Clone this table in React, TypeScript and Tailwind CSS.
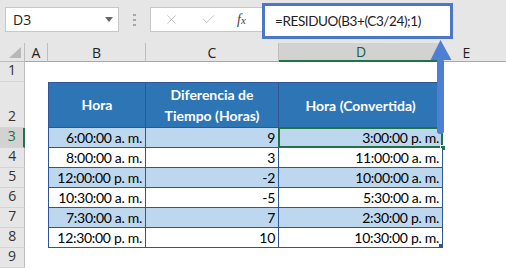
import { X, Check } from "lucide-react";

// Rows of the converted-time table: start time, offset in hours, result
const rows = [
  { hora: "6:00:00 a. m.", dif: "9", conv: "3:00:00 p. m." },
  { hora: "8:00:00 a. m.", dif: "3", conv: "11:00:00 a. m." },
  { hora: "12:00:00 p. m.", dif: "-2", conv: "10:00:00 a. m." },
  { hora: "10:30:00 a. m.", dif: "-5", conv: "5:30:00 a. m." },
  { hora: "7:30:00 a. m.", dif: "7", conv: "2:30:00 p. m." },
  { hora: "12:30:00 p. m.", dif: "10", conv: "10:30:00 p. m." },
];

const cellFont = { fontFamily: "Lato, 'Open Sans', sans-serif" };

function RowHeader({ n, selected }: { n: number; selected?: boolean }) {
  return (
    <div
      className={
        "w-[25px] shrink-0 flex items-end justify-center pb-[1px] border-b border-r text-[14px] text-[#333] border-b-[#d4d4d4] " +
        (selected ? "bg-[#d2d2d2] border-r-2 border-r-[#217346] text-[#217346]" : "bg-[#e6e6e6] border-r-[#bdbdbd]")
      }
      style={{ fontFamily: "'Open Sans', sans-serif" }}
    >
      {n}
    </div>
  );
}

function FormulaBar() {
  return (
    <div className="h-[43px] bg-[#e6e6e6] flex items-start text-[15px] text-[#222]" style={{ fontFamily: "'Open Sans', sans-serif" }}>
      <div className="mt-[7px] ml-[5px] w-[114px] h-[25px] bg-white border border-[#c6c6c6] flex items-center pl-[7px] pr-[5px]">
        <span className="flex-1 text-[14px]">D3</span>
        <svg width="8" height="5" viewBox="0 0 8 5">
          <path d="M0 0h8L4 5z" fill="#666" />
        </svg>
      </div>
      <div className="w-[31px] h-[40px] flex items-center justify-center">
        <svg width="3" height="12" viewBox="0 0 3 12">
          <rect x="0" y="0" width="3" height="2" fill="#a6a6a6" />
          <rect x="0" y="5" width="3" height="2" fill="#a6a6a6" />
          <rect x="0" y="10" width="3" height="2" fill="#a6a6a6" />
        </svg>
      </div>
      <div className="mt-[7px] h-[25px] w-[120px] bg-white border border-[#c6c6c6] border-r-0 flex items-center">
        <X className="ml-[13px] w-[15px] h-[15px] text-[#bdbdbd]" strokeWidth={1.5} />
        <Check className="ml-[22px] w-[15px] h-[15px] text-[#bdbdbd]" strokeWidth={1.5} />
        <span className="ml-[21px] text-[14px] italic text-[#444]" style={{ fontFamily: "'Liberation Serif', serif" }}>
          f<span className="text-[11px]">x</span>
        </span>
      </div>
      <div
        className="-ml-[8px] mt-[3px] w-[191px] h-[36px] bg-white border-[3px] border-[#4a77c9] flex items-center pl-[10px] text-[13.5px] tracking-[-0.4px]"
        style={cellFont}
      >
        =RESIDUO(B3+(C3/24);1)
      </div>
    </div>
  );
}

function ColumnHeaders() {
  const cols = [
    { l: "A", w: "w-[23px]" },
    { l: "B", w: "w-[98px]" },
    { l: "C", w: "w-[133px]" },
    { l: "D", w: "w-[164px]", sel: true },
  ];
  return (
    <div className="h-[19px] flex bg-[#e6e6e6] text-[14px] text-[#222]" style={{ fontFamily: "'Open Sans', sans-serif" }}>
      <div className="w-[25px] shrink-0 border-r border-b border-[#bdbdbd] flex items-end justify-end pr-[3px] pb-[3px]">
        <svg width="12" height="11" viewBox="0 0 12 11">
          <path d="M12 0v11H0z" fill="#b8b8b8" />
        </svg>
      </div>
      {cols.map((c) =>
        c.sel ? (
          <div key={c.l} className={c.w + " shrink-0 flex items-center justify-center bg-[#d2d2d2] border-b-2 border-[#217346] text-[#1e5c38]"}>
            {c.l}
          </div>
        ) : (
          <div key={c.l} className={c.w + " shrink-0 flex items-center justify-center border-r border-r-[#bdbdbd] border-b border-b-[#a8a8a8]"}>
            {c.l}
          </div>
        )
      )}
      <div className="flex-1 flex items-center justify-center border-b border-b-[#a8a8a8] pr-[16px]">E</div>
    </div>
  );
}

export default function App() {
  return (
    <div className="relative w-[506px] h-[268px] overflow-hidden bg-white">
      <FormulaBar />
      <ColumnHeaders />

      <div style={cellFont} className="text-[14px] text-black whitespace-nowrap">
        {/* Row 1: empty */}
        <div className="flex h-[20px]">
          <RowHeader n={1} />
        </div>

        {/* Row 2: table header */}
        <div className="flex h-[46px]">
          <RowHeader n={2} />
          <div className="w-[23px] shrink-0" />
          <div className="w-[98px] shrink-0 bg-[#2e75b6] border border-[#2f5597] text-white font-bold flex items-center justify-center leading-[20px]">
            Hora
          </div>
          <div className="w-[133px] shrink-0 bg-[#2e75b6] border-y border-r border-[#2f5597] text-white font-bold flex items-center justify-center text-center leading-[21px]">
            Diferencia de
            <br />
            Tiempo (Horas)
          </div>
          <div className="w-[164px] shrink-0 bg-[#2e75b6] border-y border-r border-[#2f5597] text-white font-bold flex items-center justify-center">
            Hora (Convertida)
          </div>
        </div>

        {rows.map((r, i) => {
          const band = i % 2 === 0 ? "bg-[#bdd7ee]" : "bg-white";
          const last = i === rows.length - 1;
          return (
            <div key={i} className="flex h-[20px] tracking-[-0.3px]">
              <RowHeader n={i + 3} selected={i === 0} />
              <div className="w-[23px] shrink-0" />
              <div className={band + " w-[98px] shrink-0 border-x border-b border-[#2f5597] flex items-center justify-end pr-[3px]"}>
                {r.hora}
              </div>
              <div className={band + " w-[133px] shrink-0 border-r border-b border-[#2f5597] flex items-center justify-end pr-[3px]"}>
                {r.dif}
              </div>
              <div className={band + " relative w-[164px] shrink-0 border-r border-b border-[#2f5597] flex items-center justify-end pr-[3px]"}>
                {r.conv}
                {i === 0 && (
                  <>
                    <div className="absolute -left-[1px] -top-[1px] -right-[1px] -bottom-[1px] border-2 border-[#217346]" />
                    <div className="absolute -right-[4px] -bottom-[4px] w-[6px] h-[6px] bg-[#217346] border border-white" />
                  </>
                )}
                {last && <div className="absolute -right-[1px] -bottom-[1px] w-[4px] h-[4px] bg-[#2f5597]" />}
              </div>
            </div>
          );
        })}

        <div className="flex h-[20px]">
          <RowHeader n={9} />
        </div>
      </div>

      {/* Callout arrow from the selected cell up to the formula */}
      <svg className="absolute left-[428px] top-[38px]" width="26" height="100" viewBox="0 0 26 100">
        <path d="M12.5 2L2.5 22h21z" fill="#4f7fd3" />
        <rect x="9" y="21" width="7" height="75" rx="3" fill="#4f7fd3" />
      </svg>
    </div>
  );
}
